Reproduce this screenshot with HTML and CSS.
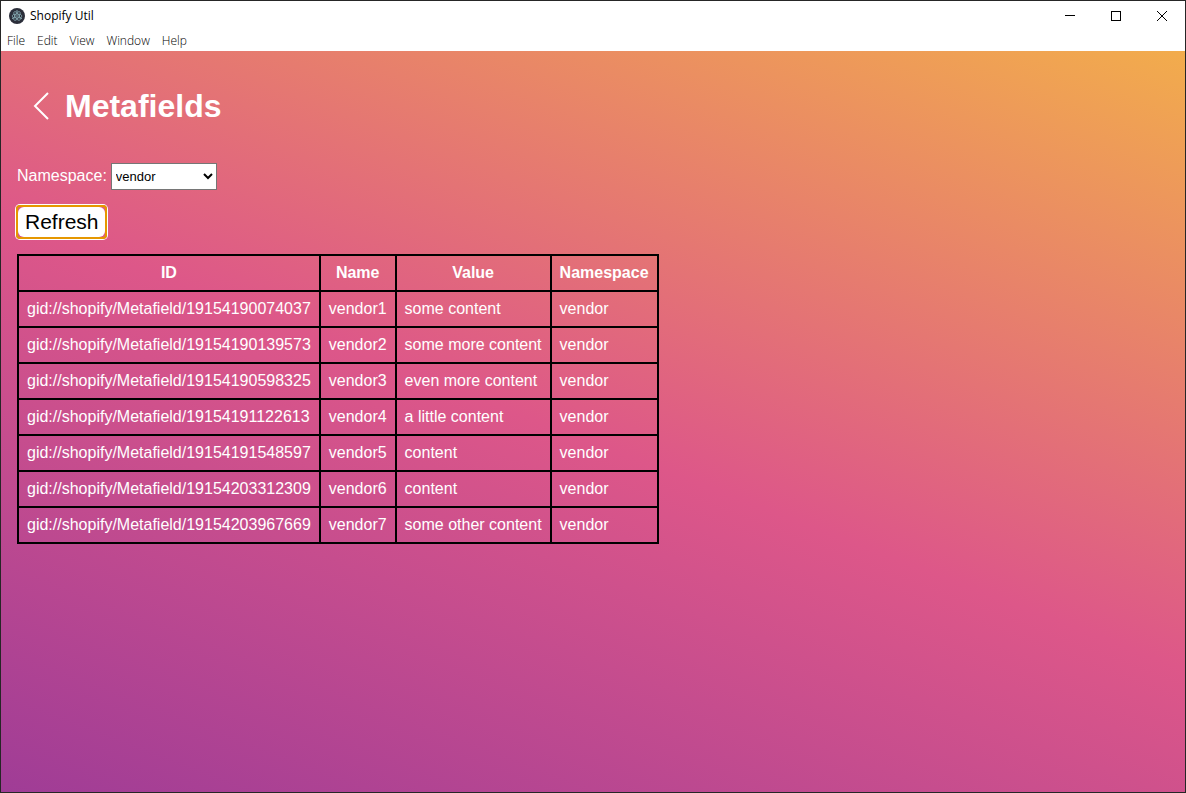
FILE: index.html
```html
<!DOCTYPE html>
<html lang="en">
<head>
<meta charset="utf-8">
<title>Shopify Util</title>
<link rel="stylesheet" href="styles.css">
</head>
<body>
<div class="window">
  <header class="titlebar">
    <svg class="app-icon" viewBox="0 0 16 16" aria-hidden="true">
      <circle cx="8" cy="8" r="8" fill="#2b2e3a"/>
      <g fill="none" stroke="#8fb5bd" stroke-width=".7">
        <ellipse cx="8" cy="8" rx="5" ry="2"/>
        <ellipse cx="8" cy="8" rx="5" ry="2" transform="rotate(60 8 8)"/>
        <ellipse cx="8" cy="8" rx="5" ry="2" transform="rotate(120 8 8)"/>
      </g>
      <g fill="#8fb5bd">
        <circle cx="8" cy="8" r=".8"/>
        <circle cx="3.8" cy="10.2" r=".8"/>
        <circle cx="12.2" cy="10.2" r=".8"/>
        <circle cx="8" cy="3" r=".8"/>
      </g>
    </svg>
    <span class="app-title">Shopify Util</span>
    <div class="controls">
      <button class="control" aria-label="Minimize"><svg viewBox="0 0 10 10" shape-rendering="crispEdges"><path d="M0 4.5H10"/></svg></button>
      <button class="control" aria-label="Maximize"><svg viewBox="0 0 10 10" shape-rendering="crispEdges"><path d="M.5 .5H9.5V9.5H.5Z"/></svg></button>
      <button class="control" aria-label="Close"><svg viewBox="0 0 10 10"><path d="M0 0L10 10M10 0L0 10"/></svg></button>
    </div>
  </header>
  <nav class="menubar">
    <button class="menu">File</button>
    <button class="menu">Edit</button>
    <button class="menu">View</button>
    <button class="menu">Window</button>
    <button class="menu">Help</button>
  </nav>
  <main class="page">
    <div class="heading">
      <a class="back" href="#" aria-label="Back"><svg viewBox="0 0 16 28"><path d="M15 1L2 14L15 27"/></svg></a>
      <h1 class="title">Metafields</h1>
    </div>
    <div class="filter">
      <label for="namespace">Namespace:</label>
      <select id="namespace" class="select"><option>vendor</option></select>
    </div>
    <button class="refresh">Refresh</button>
    <table class="fields">
      <thead>
        <tr><th>ID</th><th>Name</th><th>Value</th><th>Namespace</th></tr>
      </thead>
      <tbody>
        <tr><td>gid://shopify/Metafield/19154190074037</td><td>vendor1</td><td>some content</td><td>vendor</td></tr>
        <tr><td>gid://shopify/Metafield/19154190139573</td><td>vendor2</td><td>some more content</td><td>vendor</td></tr>
        <tr><td>gid://shopify/Metafield/19154190598325</td><td>vendor3</td><td>even more content</td><td>vendor</td></tr>
        <tr><td>gid://shopify/Metafield/19154191122613</td><td>vendor4</td><td>a little content</td><td>vendor</td></tr>
        <tr><td>gid://shopify/Metafield/19154191548597</td><td>vendor5</td><td>content</td><td>vendor</td></tr>
        <tr><td>gid://shopify/Metafield/19154203312309</td><td>vendor6</td><td>content</td><td>vendor</td></tr>
        <tr><td>gid://shopify/Metafield/19154203967669</td><td>vendor7</td><td>some other content</td><td>vendor</td></tr>
      </tbody>
    </table>
  </main>
</div>
</body>
</html>
```
FILE: styles.css
```css
* { box-sizing: border-box; }

body {
  margin: 0;
  font-family: "Liberation Sans", Arial, sans-serif;
  font-size: 16px;
  line-height: 18px;
}

.window {
  display: flex;
  flex-direction: column;
  min-height: 100vh;
  border: 1px solid #262626;
  background: #fff;
}

.titlebar {
  display: flex;
  align-items: center;
  height: 29px;
  padding-left: 8px;
  font: 12px/16px "Open Sans", sans-serif;
  color: #000;
}

.app-icon { width: 16px; height: 16px; margin-right: 5px; }

.controls { display: flex; margin-left: auto; }

.control {
  display: flex;
  align-items: center;
  justify-content: center;
  width: 46px;
  height: 28px;
  padding: 0;
  border: 0;
  background: none;
}

.control svg {
  width: 10px;
  height: 10px;
  fill: none;
  stroke: #000;
  overflow: visible;
}

.menubar { display: flex; height: 21px; }

.menu {
  padding: 0 6px;
  border: 0;
  background: none;
  font: 300 12px/20px "Open Sans", sans-serif;
  color: #000;
}

.page {
  flex: 1;
  padding: 33px 16px 16px;
  color: #fff;
  background: linear-gradient(200.96deg, #fedc2a -29.09%, #dd5789 51.77%, #7a2c9e 129.35%);
}

.heading { display: flex; align-items: center; height: 44px; gap: 16px; padding-left: 16px; }

.back { display: flex; }

.back svg {
  width: 16px;
  height: 28px;
  fill: none;
  stroke: #fff;
  stroke-width: 2;
}

.title { margin: 0; font-size: 32px; line-height: 36px; }

.filter { display: flex; align-items: baseline; gap: 4px; margin-top: 35px; }

.select {
  width: 106px;
  height: 27px;
  padding: 0;
  border: 1px solid #767676;
  border-radius: 0;
  background: #fff;
  color: #000;
  font: 13px "Liberation Sans", Arial, sans-serif;
}

.refresh {
  position: relative;
  display: block;
  height: 30px;
  margin: 17px 0 17px 1px;
  padding: 0 6px 0 7px;
  border: 0;
  border-radius: 6px;
  background: #fff;
  color: #000;
  font: 21px/30px "Liberation Sans", Arial, sans-serif;
}

/* Focus ring */
.refresh::after {
  content: "";
  position: absolute;
  inset: -2px;
  border: 2px solid #e59700;
  border-radius: 4px;
  box-shadow: 0 0 0 1px #fff;
}

.fields { border-collapse: collapse; }

.fields th,
.fields td {
  padding: 8px;
  border: 2px solid #000;
  white-space: nowrap;
}
```
